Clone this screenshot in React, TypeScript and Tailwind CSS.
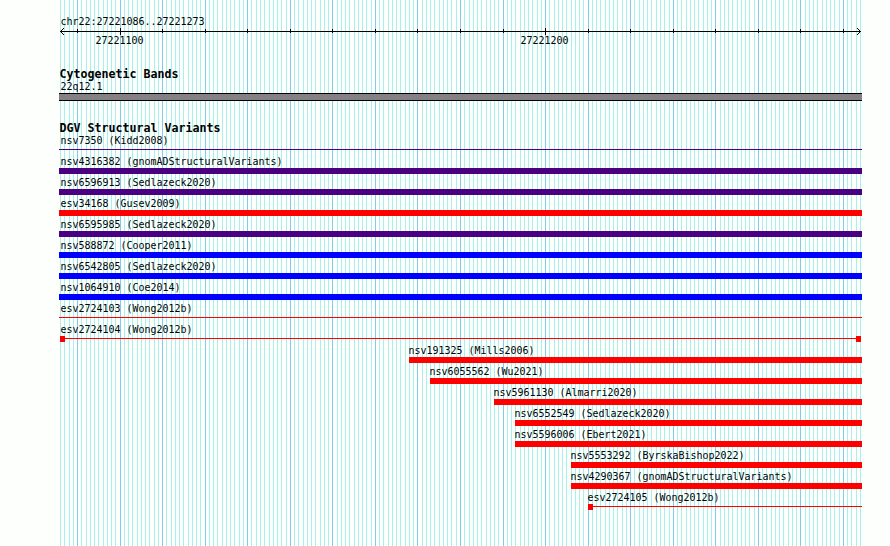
const START = 27221086;
const END = 27221273;
const LENGTH = END - START + 1;

const toX = (base: number) => Math.round(((base - START) * 800) / LENGTH);

const bases = Array.from({ length: LENGTH + 1 }, (_, i) => START + i);

type Variant = {
    name: string;
    study: string;
    color: string;
    left?: number;
    shape?: "bar" | "line" | "capped";
}

const variants: Variant[] = [
    { name: "nsv7350", study: "Kidd2008", color: "bg-[#4b0082]", shape: "line" },
    { name: "nsv4316382", study: "gnomADStructuralVariants", color: "bg-[#4b0082]" },
    { name: "nsv6596913", study: "Sedlazeck2020", color: "bg-[#4b0082]" },
    { name: "esv34168", study: "Gusev2009", color: "bg-[#ff0000]" },
    { name: "nsv6595985", study: "Sedlazeck2020", color: "bg-[#4b0082]" },
    { name: "nsv588872", study: "Cooper2011", color: "bg-[#0000ff]" },
    { name: "nsv6542805", study: "Sedlazeck2020", color: "bg-[#0000ff]" },
    { name: "nsv1064910", study: "Coe2014", color: "bg-[#0000ff]" },
    { name: "esv2724103", study: "Wong2012b", color: "bg-[#ff0000]", shape: "line" },
    { name: "esv2724104", study: "Wong2012b", color: "bg-[#ff0000]", shape: "capped" },
    { name: "nsv191325", study: "Mills2006", color: "bg-[#ff0000]", left: 350 },
    { name: "nsv6055562", study: "Wu2021", color: "bg-[#ff0000]", left: 371 },
    { name: "nsv5961130", study: "Almarri2020", color: "bg-[#ff0000]", left: 435 },
    { name: "nsv6552549", study: "Sedlazeck2020", color: "bg-[#ff0000]", left: 456 },
    { name: "nsv5596006", study: "Ebert2021", color: "bg-[#ff0000]", left: 456 },
    { name: "nsv5553292", study: "ByrskaBishop2022", color: "bg-[#ff0000]", left: 512 },
    { name: "nsv4290367", study: "gnomADStructuralVariants", color: "bg-[#ff0000]", left: 512 },
    { name: "esv2724105", study: "Wong2012b", color: "bg-[#ff0000]", left: 529, shape: "capped" },
];

function Grid() {
    return (
        <svg className="absolute left-[60px] top-0" width="802" height="546" shapeRendering="crispEdges">
            {
                bases.map((base) => (
                    <rect key={base} x={toX(base)} y="0" width="1" height="546" fill={base % 10 === 0 ? "#84caee" : "#abefec"} />
                ))
            }
        </svg>
    )
}

// One pixel per step on each arm, pointing left (dir 1) or right (dir -1)
function ArrowHead({ x, dir }: { x: number; dir: 1 | -1 }) {
    return [1, 2, 3].map((step) => (
        <g key={step}>
            <rect x={x + step * dir} y={17 - step} width="1" height="1" />
            <rect x={x + step * dir} y={17 + step} width="1" height="1" />
        </g>
    ))
}

function Ruler() {
    return (
        <svg className="block h-[34px] w-[803px]" viewBox="0 0 803 34" shapeRendering="crispEdges">
            <g fontFamily="'DejaVu Sans Mono', monospace" fontSize="10">
                <text x="1.5" y="11" textLength="144">chr22:27221086..27221273</text>
                <text x="36.5" y="30" textLength="48">27221100</text>
                <text x="461.5" y="30" textLength="48">27221200</text>
            </g>
            <rect x="1" y="17" width="801" height="1" />
            {
                bases.filter((base) => base % 10 === 0).map((base) => (
                    <rect
                        key={base}
                        x={toX(base) + 1}
                        y={base % 100 === 0 ? 14 : 15}
                        width="1"
                        height={base % 100 === 0 ? 7 : 4}
                    />
                ))
            }
            <ArrowHead x={1} dir={1} />
            <ArrowHead x={801} dir={-1} />
        </svg>
    )
}

function Glyph({ color, shape = "bar", open }: { color: string; shape?: Variant["shape"]; open: boolean }) {
    if (shape === "line") {
        return <div className={`mt-[2px] h-px ${color}`} />
    }

    if (shape === "capped") {
        return (
            <div className={`flex h-1.5 items-start ${open ? "" : "px-px"}`}>
                <div className={`h-1.5 w-[5px] ${color}`} />
                <div className={`mt-[2px] h-px grow ${color}`} />
                {!open && <div className={`h-1.5 w-[5px] ${color}`} />}
            </div>
        )
    }

    return <div className={`h-1.5 ${color}`} />
}

export default function App() {
    return (
        <div className="relative h-[546px] w-[890px] overflow-hidden bg-[#fdfffd] font-['DejaVu_Sans_Mono',monospace] text-black">
            <Grid />
            <div className="relative ml-[59px] w-[803px] pt-[14px]">
                <Ruler />

                <h2 className="mt-5 h-3 whitespace-pre pl-[0.5px] text-[11.63px] font-bold leading-3">Cytogenetic Bands</h2>
                <p className="h-[13px] pl-[1.5px] text-[9.97px] leading-[13px]">22q12.1</p>
                <div className="h-2 border-y border-black bg-[#848084]" />

                <h2 className="mt-[21px] h-3 whitespace-pre pl-[0.5px] text-[11.63px] font-bold leading-3">DGV Structural Variants</h2>
                {
                    variants.map(({ name, study, color, left = 0, shape }) => (
                        <div key={name} className="h-[21px]" style={{ paddingLeft: left }}>
                            <p className={`h-[13px] whitespace-pre text-[9.97px] leading-[13px] ${left > 0 ? "-ml-[0.5px]" : "pl-[1.5px]"}`}>
                                {name} ({study})
                            </p>
                            <Glyph color={color} shape={shape} open={left > 0} />
                        </div>
                    ))
                }
            </div>
        </div>
    )
}
